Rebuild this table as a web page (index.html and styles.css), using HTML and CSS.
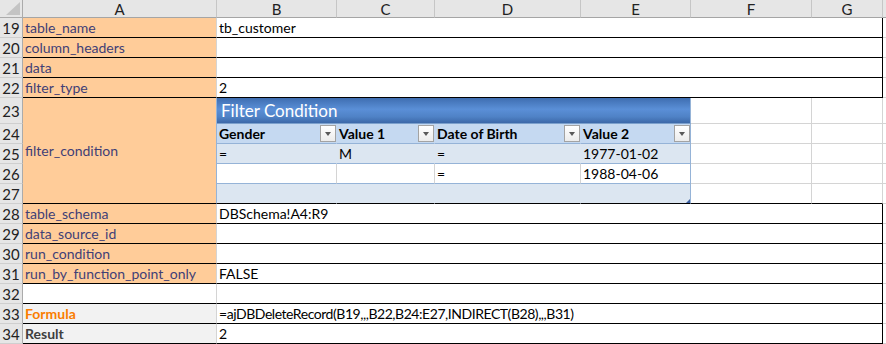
FILE: index.html
```html
<!DOCTYPE html>
<html lang="en">
<head>
  <meta charset="UTF-8" />
  <title>ajDBDeleteRecord</title>
  <link rel="stylesheet" href="styles.css">
</head>
<body>
  <div class="sheet">
    <div class="corner">
      <svg width="14" height="13" viewBox="0 0 14 13"><polygon points="0,13 14,13 14,0" fill="#c4c4c4"/></svg>
    </div>
    <div class="ch">A</div>
    <div class="ch">B</div>
    <div class="ch">C</div>
    <div class="ch">D</div>
    <div class="ch">E</div>
    <div class="ch">F</div>
    <div class="ch">G</div>
    <div class="ch"></div>

    <div class="rh">19</div>
    <div class="c in bk-b">table_name</div>
    <div class="c wide">tb_customer</div>
    <div class="c"></div>

    <div class="rh">20</div>
    <div class="c in bk-b">column_headers</div>
    <div class="c wide"></div>
    <div class="c"></div>

    <div class="rh">21</div>
    <div class="c in bk-b">data</div>
    <div class="c wide"></div>
    <div class="c"></div>

    <div class="rh">22</div>
    <div class="c in bk-b">filter_type</div>
    <div class="c wide">2</div>
    <div class="c"></div>

    <!-- rows 23-27: filter condition table -->
    <div class="rh tall">23</div>
    <div class="c in bk-b merged">filter_condition</div>
    <div class="c tbl-title">Filter Condition</div>
    <div class="c"></div>
    <div class="c"></div>
    <div class="c"></div>

    <div class="rh">24</div>
    <div class="c th">Gender<span class="dd"></span></div>
    <div class="c th">Value 1<span class="dd"></span></div>
    <div class="c th">Date of Birth<span class="dd"></span></div>
    <div class="c th te">Value 2<span class="dd"></span></div>
    <div class="c"></div>
    <div class="c"></div>
    <div class="c"></div>

    <div class="rh">25</div>
    <div class="c band">=</div>
    <div class="c band">M</div>
    <div class="c band">=</div>
    <div class="c band te">1977-01-02</div>
    <div class="c"></div>
    <div class="c"></div>
    <div class="c"></div>

    <div class="rh">26</div>
    <div class="c plain"></div>
    <div class="c plain"></div>
    <div class="c plain">=</div>
    <div class="c plain te">1988-04-06</div>
    <div class="c"></div>
    <div class="c"></div>
    <div class="c"></div>

    <div class="rh">27</div>
    <div class="c band last"></div>
    <div class="c band last"></div>
    <div class="c band last"></div>
    <div class="c band last te tbl-end"></div>
    <div class="c bk-b"></div>
    <div class="c bk-b"></div>
    <div class="c"></div>

    <div class="rh">28</div>
    <div class="c in bk-b">table_schema</div>
    <div class="c wide">DBSchema!A4:R9</div>
    <div class="c"></div>

    <div class="rh">29</div>
    <div class="c in bk-b">data_source_id</div>
    <div class="c wide"></div>
    <div class="c"></div>

    <div class="rh">30</div>
    <div class="c in bk-b">run_condition</div>
    <div class="c wide"></div>
    <div class="c"></div>

    <div class="rh">31</div>
    <div class="c in bk-b">run_by_function_point_only</div>
    <div class="c wide">FALSE</div>
    <div class="c"></div>

    <div class="rh">32</div>
    <div class="c bk-b"></div>
    <div class="c wide"></div>
    <div class="c"></div>

    <div class="rh">33</div>
    <div class="c calc bk-b">Formula</div>
    <div class="c wide formula">=ajDBDeleteRecord(B19,,,B22,B24:E27,INDIRECT(B28),,,B31)</div>
    <div class="c"></div>

    <div class="rh">34</div>
    <div class="c out bk-b">Result</div>
    <div class="c wide">2</div>
    <div class="c"></div>
  </div>
</body>
</html>
```

FILE: styles.css
```css
* {
  box-sizing: border-box;
}

body {
  margin: 0;
  background: #fff;
  font-family: 'Lato', 'Liberation Sans', sans-serif;
  font-size: 14px;
  color: #000;
}

.sheet {
  display: grid;
  grid-template-columns: 23px 194px 120px 98px 146px 110px 121px 71px 1fr;
  grid-template-rows: 18px repeat(4, 20px) 26px repeat(11, 20px);
  width: 886px;
  height: 344px;
  overflow: hidden;
}

/* headers */
.corner {
  background: #e6e6e6;
  border-right: 1px solid #ababab;
  border-bottom: 1px solid #ababab;
  display: flex;
  justify-content: flex-end;
  align-items: flex-end;
  padding: 0 2px 2px 0;
}

.ch {
  background: #e6e6e6;
  border-right: 1px solid #c6c6c6;
  border-bottom: 1px solid #a5a5a5;
  display: flex;
  justify-content: center;
  align-items: center;
  font-size: 15px;
  color: #222;
}

.rh {
  background: #e6e6e6;
  border-right: 1px solid #ababab;
  border-bottom: 1px solid #cfcfcf;
  display: flex;
  justify-content: center;
  align-items: flex-end;
  font-size: 15px;
  line-height: 18px;
  color: #222;
}

.rh.tall {
  align-items: center;
}

/* cells */
.c {
  border-right: 1px solid #d4d4d4;
  border-bottom: 1px solid #d4d4d4;
  padding: 0 2px;
  display: flex;
  align-items: flex-end;
  line-height: 18px;
  white-space: nowrap;
  overflow: hidden;
}

.bk-b {
  border-bottom-color: #000;
}

.wide {
  grid-column: span 6;
  border-bottom-color: #000;
  border-right-color: #000;
}

.formula {
  letter-spacing: -0.45px;
}

.in {
  background: #ffcc99;
  color: #3f3f76;
}

.merged {
  grid-row: span 5;
  align-items: center;
  border-right-color: #95b3d7;
}

.calc {
  background: #f2f2f2;
  color: #fa7d00;
  font-weight: bold;
}

.out {
  background: #f2f2f2;
  color: #3f3f3f;
  font-weight: bold;
}

/* filter condition table */
.tbl-title {
  grid-column: span 4;
  background: linear-gradient(#3f6eb1, #5a8fd7 45%, #4f82c6 75%, #3c68a8);
  border-right-color: #95b3d7;
  border-bottom-color: #7ba0cd;
  color: #fff;
  font-size: 17px;
  line-height: 24px;
  padding-left: 4px;
}

.th {
  background: #c5d9f1;
  border-right-color: #c5d9f1;
  border-bottom-color: #95b3d7;
  font-weight: bold;
  justify-content: space-between;
  align-items: center;
  padding-right: 0;
}

.dd {
  width: 16px;
  height: 17px;
  border: 1px solid #a3a3a3;
  background: linear-gradient(#ffffff, #ececec);
  display: flex;
  justify-content: center;
  align-items: center;
}

.dd::after {
  content: "";
  border-left: 3px solid transparent;
  border-right: 3px solid transparent;
  border-top: 4px solid #595959;
}

.band {
  background: #dce6f1;
  border-right-color: #dce6f1;
  border-bottom-color: #95b3d7;
}

.plain {
  border-bottom-color: #95b3d7;
}

.band.last {
  border-bottom-color: #000;
}

.c.te {
  border-right-color: #95b3d7;
}

.tbl-end {
  position: relative;
}

.tbl-end::after {
  content: "";
  position: absolute;
  right: 0;
  bottom: 0;
  border-left: 4px solid transparent;
  border-bottom: 4px solid #3b5ea0;
}
```
